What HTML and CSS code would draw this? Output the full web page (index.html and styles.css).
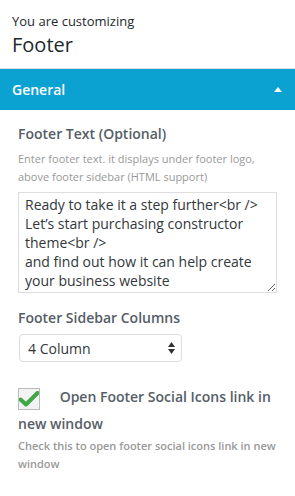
FILE: index.html
```html
<!DOCTYPE html>
<html lang="en">
<head>
    <meta charset="UTF-8">
    <meta name="viewport" content="width=device-width, initial-scale=1.0">
    <title>Customizing Footer</title>
    <link rel="stylesheet" href="styles.css">
</head>
<body>

    <div class="panel-head">
        <span class="panel-sub">You are customizing</span>
        <h2 class="panel-title">Footer</h2>
    </div>

    <div class="section-head">
        <span>General</span>
        <span class="caret"></span>
    </div>

    <div class="section-body">
        <div class="control">
            <label class="control-title" for="footerText">Footer Text (Optional)</label>
            <p class="description">Enter footer text. it displays under footer logo, above footer sidebar (HTML support)</p>
            <textarea id="footerText" rows="5">Ready to take it a step further&lt;br /&gt;
Let’s start purchasing constructor theme&lt;br /&gt;
and find out how it can help create your business website</textarea>
        </div>

        <div class="control">
            <label class="control-title" for="columns">Footer Sidebar Columns</label>
            <div class="select-wrap">
                <select id="columns">
                    <option>1 Column</option>
                    <option>2 Column</option>
                    <option>3 Column</option>
                    <option selected>4 Column</option>
                </select>
                <svg class="select-arrows" width="7" height="12" viewBox="0 0 7 12">
                    <path d="M3.5 0 L7 5 L0 5 Z M0 7 L7 7 L3.5 12 Z" fill="#333"/>
                </svg>
            </div>
        </div>

        <div class="control check-control">
            <label class="check-label">
                <span class="checkbox">
                    <svg width="20" height="16" viewBox="0 0 20 16">
                        <path d="M1.5 8.5 L7 13.5 L18.5 2" fill="none" stroke="#3fa845" stroke-width="4" stroke-linecap="round" stroke-linejoin="round"/>
                    </svg>
                </span>
                Open Footer Social Icons link in new window
            </label>
            <p class="description strong">Check this to open footer social icons link in new window</p>
        </div>
    </div>

</body>
</html>
```

FILE: styles.css
```css
body {
    margin: 0;
    font-family: "Open Sans", sans-serif;
    background-color: white;
    color: #32373c;
}

.panel-head {
    padding: 11px 12px 9px;
    border-bottom: 1px solid #ddd;
}

.panel-sub {
    display: block;
    font-size: 13px;
    line-height: 20px;
    color: #23282d;
}

.panel-title {
    margin: 0;
    font-size: 20px;
    font-weight: 400;
    line-height: 28px;
    color: #23282d;
}

.section-head {
    display: flex;
    justify-content: space-between;
    align-items: center;
    height: 41px;
    padding: 0 13px 0 12px;
    background-color: #0ba2d2;
    color: white;
    font-size: 14px;
    font-weight: 600;
}

.caret {
    width: 0;
    height: 0;
    border-left: 4px solid transparent;
    border-right: 4px solid transparent;
    border-bottom: 5px solid white;
}

.section-body {
    padding: 12px 18px;
}

.control {
    margin-bottom: 13px;
}

.control-title {
    display: block;
    font-size: 14px;
    font-weight: 600;
    line-height: 24px;
    color: #555d66;
}

.description {
    margin: 4px 0 6px;
    font-size: 11px;
    line-height: 18px;
    color: #999;
}

.description.strong {
    margin-top: 0;
    font-weight: 600;
}

textarea {
    box-sizing: border-box;
    display: block;
    width: 100%;
    height: 101px;
    margin: 0;
    padding: 2px 6px;
    border: 1px solid #ddd;
    font-family: "Open Sans", sans-serif;
    font-size: 14px;
    line-height: 19px;
    color: #32373c;
    resize: vertical;
    overflow: hidden;
}

.select-wrap {
    position: relative;
    width: 163px;
    margin: 4px 0 0 1px;
}

select {
    box-sizing: border-box;
    width: 100%;
    height: 28px;
    padding: 0 8px;
    border: 1px solid #ddd;
    border-radius: 4px;
    background-color: white;
    font-family: "Open Sans", sans-serif;
    font-size: 14px;
    color: #32373c;
    appearance: none;
}

.select-arrows {
    position: absolute;
    right: 7px;
    top: 8px;
    pointer-events: none;
}

.check-control {
    margin-top: 21px;
}

.check-label {
    display: block;
    font-size: 14px;
    font-weight: 600;
    line-height: 27px;
    color: #555d66;
}

.checkbox {
    box-sizing: border-box;
    display: inline-flex;
    align-items: center;
    justify-content: center;
    width: 22px;
    height: 22px;
    margin-right: 16px;
    vertical-align: -5px;
    border: 1px solid #bbb;
    background-color: #f3f3f3;
}
```
